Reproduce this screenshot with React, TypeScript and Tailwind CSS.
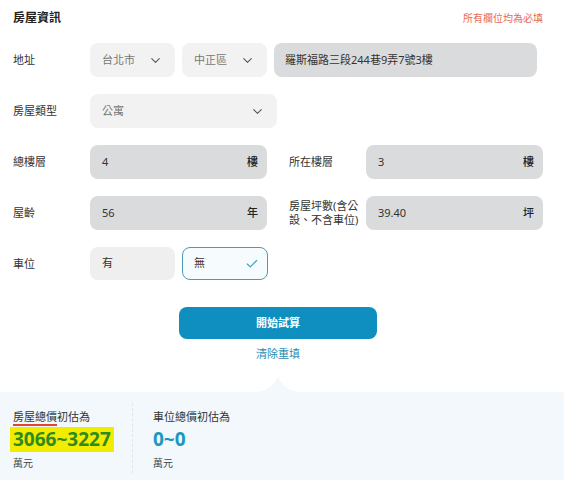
import { ChevronDown, Check } from "lucide-react";

const font = {
  fontFamily: '"Noto Sans", "Noto Sans CJK TC", sans-serif',
};

function Select({ value, className }: { value: string; className: string }) {
  return (
    <div
      className={`flex h-[34px] items-center justify-between rounded-lg bg-[#f2f2f2] pl-3 pr-3 text-[11px] text-[#777] ${className}`}
    >
      <span>{value}</span>
      <ChevronDown size={15} strokeWidth={1.7} className="text-[#555]" />
    </div>
  );
}

function Field({ value, unit }: { value: string; unit?: string }) {
  return (
    <div className="flex h-[34px] flex-1 items-center justify-between rounded-lg bg-[#dadbdc] pl-3 pr-[9px] text-[11px] text-[#333]">
      <span>{value}</span>
      {unit && <span className="font-medium text-[#222]">{unit}</span>}
    </div>
  );
}

function Label({ children }: { children: React.ReactNode }) {
  return (
    <div className="w-[77px] shrink-0 text-[11px] leading-[14px] text-[#333]">
      {children}
    </div>
  );
}

export default function App() {
  return (
    <div className="flex h-[480px] w-[564px] flex-col overflow-hidden bg-white" style={font}>
      {/* Form */}
      <div className="pl-[13px] pr-[21px] pt-[10px]">
        <div className="flex items-center justify-between">
          <h2 className="text-[12px] font-bold leading-4 text-[#222]">房屋資訊</h2>
          <span className="text-[10px] text-[#e86a55]">所有欄位均為必填</span>
        </div>

        <div className="mt-[17px] flex flex-col gap-[17px]">
          {/* 地址 */}
          <div className="flex items-center">
            <Label>地址</Label>
            <div className="flex flex-1 gap-[7px] pr-[6px]">
              <Select value="台北市" className="w-[85px]" />
              <Select value="中正區" className="w-[85px]" />
              <div className="flex h-[34px] flex-1 items-center rounded-lg bg-[#dadbdc] px-[11px] text-[11px] text-[#333]">
                羅斯福路三段244巷9弄7號3樓
              </div>
            </div>
          </div>

          {/* 房屋類型 */}
          <div className="flex items-center">
            <Label>房屋類型</Label>
            <Select value="公寓" className="w-[187px] text-[#666]" />
          </div>

          {/* 總樓層 / 所在樓層 */}
          <div className="flex items-center gap-[22px]">
            <div className="flex flex-1 items-center">
              <Label>總樓層</Label>
              <Field value="4" unit="樓" />
            </div>
            <div className="flex flex-1 items-center">
              <Label>所在樓層</Label>
              <Field value="3" unit="樓" />
            </div>
          </div>

          {/* 屋齡 / 坪數 */}
          <div className="flex items-center gap-[22px]">
            <div className="flex flex-1 items-center">
              <Label>屋齡</Label>
              <Field value="56" unit="年" />
            </div>
            <div className="flex flex-1 items-center">
              <Label>
                房屋坪數(含公
                <br />
                設、不含車位)
              </Label>
              <Field value="39.40" unit="坪" />
            </div>
          </div>

          {/* 車位 */}
          <div className="flex items-center">
            <Label>車位</Label>
            <div className="flex gap-[7px]">
              <div className="flex h-[33px] w-[85px] items-center rounded-lg bg-[#efefef] px-3 text-[11px] text-[#333]">
                有
              </div>
              <div className="flex h-[33px] w-[86px] items-center justify-between rounded-lg border border-[#4d9bb0] bg-[#f6fcfd] pl-[11px] pr-2 text-[11px] text-[#333]">
                <span>無</span>
                <Check size={14} strokeWidth={2} className="text-[#3d9fc2]" />
              </div>
            </div>
          </div>
        </div>

        <div className="mt-[27px] flex flex-col items-center">
          <button className="h-[32px] w-[198px] rounded-lg bg-[#0f8fc0] text-[11px] font-bold text-white">
            開始試算
          </button>
          <span className="mt-[7px] text-[11px] text-[#2a8db5]">清除重填</span>
        </div>
      </div>

      {/* Result panel */}
      <div className="relative mt-[29px] flex-1 bg-[#f2f8fc]">
        <svg
          className="absolute left-[252px] top-[-16px]"
          width="52"
          height="16"
          viewBox="0 0 52 16"
        >
          <path d="M0 16 C14 16 20 12 26 1 C32 12 38 16 52 16 Z" fill="#f2f8fc" />
        </svg>
        <div className="flex pl-[13px] pt-[17px]">
          <div className="w-[119px]">
            <div className="text-[11px] leading-4 text-[#333]">
              <span className="border-b-2 border-[#e2452f]">房屋總價</span>初估為
            </div>
            <div className="-ml-[3px] mt-[2px] inline-block bg-[#f2ec00] px-[3px] text-[19px] font-bold leading-[25px] text-[#2f8a1f]">
              3066~3227
            </div>
            <div className="mt-[4px] text-[10px] text-[#444]">萬元</div>
          </div>
          <div className="mt-[-6px] h-[70px] border-l border-dashed border-[#dde6ec]" />
          <div className="pl-[20px]">
            <div className="text-[11px] leading-4 text-[#333]">車位總價初估為</div>
            <div className="mt-[2px] text-[19px] font-bold leading-[25px] text-[#1d97bd]">
              0~0
            </div>
            <div className="mt-[4px] text-[10px] text-[#444]">萬元</div>
          </div>
        </div>
      </div>
    </div>
  );
}
